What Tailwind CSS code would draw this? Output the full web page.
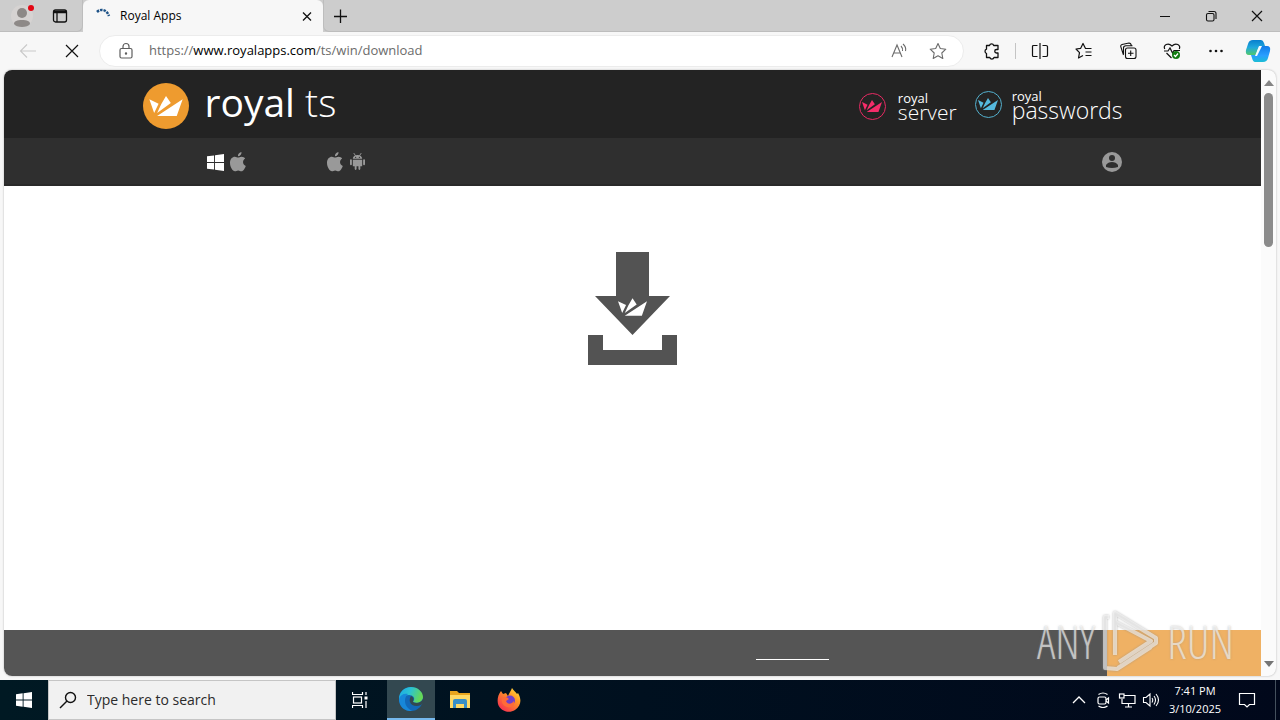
<!DOCTYPE html>
<html lang="en">
<head>
<meta charset="utf-8">
<title>Royal Apps</title>
<script src="https://cdn.jsdelivr.net/npm/@tailwindcss/browser@4"></script>
</head>
<body class="h-screen flex flex-col overflow-hidden bg-[#f7f7f7] font-['Open_Sans','Noto_Sans',sans-serif] text-black">
<svg class="hidden">
  <symbol id="crown" viewBox="0 0 90 54"><path d="M0 9 25 21 13 46ZM45 0 58 19 21 46 32 22ZM90 9 74 54H21Z"/></symbol>
  <symbol id="apple" viewBox="0 0 16 20"><path d="M11.500 0c.2 2.400-1.500 4.200-3.600 4.200C7.700 2 9.400.3 11.500 0ZM8 5.600c1 0 2-.9 3.600-.9 1.500 0 2.800.7 3.600 1.900-3.100 1.900-2.700 6 .6 7.300-.7 2-2.400 5.300-4.400 5.300-1.200 0-1.700-.8-3.200-.8s-2 .8-3.200.8C2.600 19.200 0 15 0 11c0-4 2.400-6.200 4.900-6.200 1.400 0 2.300.8 3.100.8Z"/></symbol>
  <symbol id="windows" viewBox="0 0 18 18"><path d="M0 2.500 7.500 1.500V8.500H0ZM8.500 1.300 18 0V8.500H8.500ZM0 9.500H7.500V16.500L0 15.500ZM8.500 9.500H18V18L8.500 16.700Z"/></symbol>
</svg>

<header class="h-8 shrink-0 flex bg-[#cdcdcd]">
  <div class="w-[83px] flex items-center pl-[11px] gap-4 border-b border-r border-[#bdbdbd] rounded-br-md">
    <button aria-label="Profile" class="size-6"><svg viewBox="0 0 24 24" class="size-6"><circle cx="11" cy="12" r="11" fill="#d6d3d2"/><circle cx="11" cy="9" r="5" fill="#8d8987"/><path d="M3 20c0-3 3-4 8-4s8 1 8 4c-2 4-14 4-16 0Z" fill="#8d8987"/><circle cx="20" cy="4" r="3" fill="#e30613"/></svg></button>
    <button aria-label="Tab actions" class="size-5"><svg viewBox="0 0 20 20" class="size-5" fill="none" stroke="#111" stroke-width="1.300"><rect x="2.500" y="4" width="13" height="12" rx="2"/><path d="M3 6H15.500" stroke-width="2.500"/><path d="M6 6V16"/></svg></button>
  </div>
  <div class="w-[240px] flex items-center bg-[#f7f7f7] rounded-t-md pl-3 pr-2">
    <svg viewBox="0 0 16 16" class="size-4 shrink-0" fill="none" stroke="#1d5287" stroke-width="2.500" stroke-dasharray="2.500 1"><path d="M2 4C6 0 12 2 14 8"/></svg>
    <span class="ml-[9px] text-xs flex-1">Royal Apps</span>
    <button aria-label="Close tab" class="size-4"><svg viewBox="0 0 16 16" class="size-4" stroke="#111" stroke-width="1.300"><path d="M4 4.500 12 12.500M12 4.500 4 12.500"/></svg></button>
  </div>
  <div class="flex-1 flex items-center pl-2 border-b border-l border-[#bdbdbd] rounded-bl-md">
    <button aria-label="New tab" class="size-4"><svg viewBox="0 0 16 16" class="size-4" stroke="#111" stroke-width="1.300"><path d="M8.500 1.500V15M2 8.500H15"/></svg></button>
    <div class="ml-auto flex items-center gap-[30px] pr-[15px]">
      <button aria-label="Minimize" class="size-4"><svg viewBox="0 0 16 16" class="size-4" stroke="#111"><path d="M3 8.500H13"/></svg></button>
      <button aria-label="Restore" class="size-4"><svg viewBox="0 0 16 16" class="size-4" fill="none" stroke="#111" stroke-width="1.100"><rect x="3.500" y="5.500" width="7.500" height="7.500" rx="1.500"/><path d="M5.500 3.500H11Q13 3.500 13 5.500V11"/></svg></button>
      <button aria-label="Close window" class="size-4"><svg viewBox="0 0 16 16" class="size-4" stroke="#111" stroke-width="1.200"><path d="M3 3 13 13M13 3 3 13"/></svg></button>
    </div>
  </div>
</header>

<div class="h-[38px] shrink-0 flex items-center pl-[18px] pr-[9px]">
  <button aria-label="Back" disabled class="size-5"><svg viewBox="0 0 20 20" class="size-5" fill="none" stroke="#c9c9c9" stroke-width="1.100"><path d="M18 10H3M9 3.500 2.500 10 9 16.500"/></svg></button>
  <button aria-label="Stop" class="size-5 ml-6"><svg viewBox="0 0 20 20" class="size-5" stroke="#111" stroke-width="1.200"><path d="M4 4 16 16M16 4 4 16"/></svg></button>
  <div class="ml-[17px] h-[32px] flex-1 flex items-center rounded-full bg-white border border-[#ececec] pl-[17px] pr-[15px]">
    <svg viewBox="0 0 18 18" class="size-[18px]" fill="none" stroke="#5e5e5e" stroke-width="1.200"><rect x="3" y="6.500" width="12" height="9.500" rx="1.500"/><path d="M6 6.500V4.500a3 3 0 0 1 6 0V6.500"/><circle cx="9" cy="11.500" r=".6" fill="#5e5e5e"/></svg>
    <a href="https://www.royalapps.com/ts/win/download" class="ml-[14px] text-[13px] text-[#6b6b6b] whitespace-nowrap">https://<span class="text-black">www.royalapps.com</span>/ts/win/download</a>
    <button aria-label="Read aloud" class="ml-auto size-5"><svg viewBox="0 0 20 20" class="size-5" fill="none" stroke="#6b6b6b" stroke-width="1.100"><path d="M3 16 8 4 13 16M5 12H11M12 5Q14 7 13.500 10M14 3Q17.500 6 16.500 10"/></svg></button>
    <button aria-label="Add to favorites" class="ml-[19px] size-5"><svg viewBox="0 0 20 20" class="size-5" fill="none" stroke="#6b6b6b" stroke-width="1.100" stroke-linejoin="round"><path d="M10 2.500 12.300 7.500 17.800 8.200 13.800 12 14.800 17.500 10 14.800 5.200 17.500 6.200 12 2.200 8.200 7.700 7.500Z"/></svg></button>
  </div>
  <div class="flex items-center ml-[18px] gap-6">
    <div class="flex items-center">
      <button aria-label="Extensions" class="size-5"><svg viewBox="0 0 20 20" class="size-5" fill="none" stroke="#111" stroke-width="1.300" stroke-linejoin="round"><path d="M4.500 4.500H7.500A2.200 2.200 0 0 1 11.700 4.500H16V8.500H14.500A1.500 1.500 0 0 0 14.500 12H16V16.500H12A2.200 2.200 0 0 1 7.800 16.500H4.500V12.500A2.300 2.300 0 0 1 4.500 8.200Z"/></svg></button>
      <span class="ml-[13px] w-px h-4 bg-[#c4c4c4]"></span>
      <button aria-label="Split screen" class="ml-[14px] size-5"><svg viewBox="0 0 20 20" class="size-5" fill="none" stroke="#111" stroke-width="1.200"><path d="M7.500 4.500H3.500Q2.500 4.500 2.500 5.500V14.500Q2.500 15.500 3.500 15.500H7.500M12.500 4.500H16Q17.500 4.500 17.500 5.500V14.500Q17.500 15.500 16 15.500H12.500M10 2V18"/></svg></button>
    </div>
    <button aria-label="Favorites" class="size-5"><svg viewBox="0 0 20 20" class="size-5" fill="none" stroke="#111" stroke-width="1.200" stroke-linejoin="round"><path d="M17.500 7.500H11.500L9 2.500 6.700 7.300 2 8 5.500 11.700 4.500 17 9 14.500M11.500 11H17.500M11.500 14.500H17.500"/></svg></button>
    <button aria-label="Collections" class="size-5"><svg viewBox="0 0 20 20" class="size-5" fill="none" stroke="#111" stroke-width="1.100"><rect x="7.500" y="7" width="10.500" height="10.500" rx="2"/><path d="M12.700 9.500V15M10 12.300H15.500M5.500 14 2.700 5.500Q2.500 4 4 3.500L11 2Q13 2 13.500 5M5.500 13V7Q5.500 4.800 8 4.800H14.500"/></svg></button>
    <button aria-label="Browser essentials" class="size-5"><svg viewBox="0 0 20 20" class="size-5" fill="none" stroke="#111" stroke-width="1.200"><path d="M2.700 8C1 4 6 1 10 5 14 1 19 4 17.300 8M2 10H6L8 7 10.500 12 12 9.500H18M4.500 12 9.500 17"/><circle cx="14" cy="14" r="4" fill="#107c10" stroke="none"/><path d="m12 14 1.500 1.500 2.500-3" stroke="#fff"/></svg></button>
    <button aria-label="Settings and more" class="size-5"><svg viewBox="0 0 20 20" class="size-5" fill="#111"><circle cx="4.500" cy="10" r="1.300"/><circle cx="10" cy="10" r="1.300"/><circle cx="15.500" cy="10" r="1.300"/></svg></button>
    <button aria-label="Copilot" class="-ml-[5px] size-[26px]"><svg viewBox="0 0 26 26" class="size-[26px]"><defs><linearGradient id="cpa" x2="0" y2="1"><stop stop-color="#087fce"/><stop offset=".5" stop-color="#20a8dc"/><stop offset="1" stop-color="#52c96c"/></linearGradient><linearGradient id="cpb" x2="0" y2="1"><stop stop-color="#127be8"/><stop offset=".6" stop-color="#299fff"/><stop offset="1" stop-color="#1bbdd4"/></linearGradient></defs><path d="M8 2H16Q18 2 19 5L20 8H16Q14 8 13 11L11 17H4Q0 17 1 12L3 6Q4 2 8 2Z" fill="url(#cpa)"/><path d="M18 24H10Q8 24 7 20L6 17H10Q12 17 13 14L15 8H22Q26 8 25 13L23 20Q22 24 18 24Z" fill="url(#cpb)"/><path d="M14 8H17L12 18H10Z" fill="#f5fbff"/></svg></button>
  </div>
</div>

<div class="flex-1 min-h-0 px-1 pb-1">
  <div class="relative h-full flex rounded-lg overflow-hidden bg-[#fbfbfb] shadow-[0_0_2px_#aaa]">
    <div class="flex-1 flex flex-col bg-white">
      <div class="h-[68px] shrink-0 bg-[#232323]">
        <div class="h-full max-w-[980px] mx-auto flex items-center text-white">
          <a href="#" class="flex items-center pt-1">
            <span class="size-[46px] rounded-full bg-[#ee9b2f] flex items-center justify-center"><svg class="w-9 h-5 fill-white"><use href="#crown"/></svg></span>
            <span class="ml-4 text-[39px] leading-[46px] -mt-2">royal <span class="font-light">ts</span></span>
          </a>
          <a href="#" class="ml-auto flex items-center gap-3 pt-1">
            <span class="size-[27px] rounded-full border border-[#e82a63] flex items-center justify-center"><svg class="w-5 h-3 fill-[#f52d6a]"><use href="#crown"/></svg></span>
            <span class="flex flex-col text-[13px] leading-[11px]">royal<span class="text-[21px] leading-4 font-light">server</span></span>
          </a>
          <a href="#" class="ml-[18px] flex items-center gap-[10px]">
            <span class="size-[27px] rounded-full border border-[#53b0ce] flex items-center justify-center"><svg class="w-5 h-3 fill-[#55b9de]"><use href="#crown"/></svg></span>
            <span class="flex flex-col text-[13px] leading-[11px]">royal<span class="text-[23px] leading-4 font-light">passwords</span></span>
          </a>
        </div>
      </div>
      <nav class="h-12 shrink-0 bg-[#2f2f2f] border-b-2 border-[#292929]">
        <div class="h-full max-w-[980px] mx-auto flex items-center pt-px pl-16 text-[#999]">
          <a href="#" aria-label="Windows" class="pt-px"><svg class="w-[17px] h-[17px] fill-white"><use href="#windows"/></svg></a>
          <a href="#" aria-label="macOS" class="ml-[6px]"><svg class="w-4 h-5 fill-current"><use href="#apple"/></svg></a>
          <a href="#" aria-label="iOS" class="ml-[81px]"><svg class="w-4 h-5 fill-current"><use href="#apple"/></svg></a>
          <a href="#" aria-label="Android" class="ml-[7px]"><svg viewBox="0 0 16 18" class="w-[15px] h-[17px] fill-current"><path d="M3 6C3 3.500 5 2 8 2S13 3.500 13 6ZM3 7H13V14H11V17Q10 19 9 17V14H7V17Q6 19 5 17V14H3Z"/><rect y="6.500" width="2" height="6.500" rx="1"/><rect x="14" y="6.500" width="2" height="6.500" rx="1"/><path d="M4 0 6 3M12 0 10 3" stroke="currentColor"/><circle cx="6" cy="4.500" r=".7" fill="#2f2f2f"/><circle cx="10" cy="4.500" r=".7" fill="#2f2f2f"/></svg></a>
          <a href="#" aria-label="Account" class="ml-auto mr-px"><svg viewBox="0 0 20 20" class="size-5"><circle cx="10" cy="10" r="10" fill="#999"/><circle cx="10" cy="6" r="3" fill="#2f2f2f"/><path d="M4 15V13Q6 10 10 10T16 13V15Q10 17 4 15Z" fill="#2f2f2f"/></svg></a>
        </div>
      </nav>
      <main class="flex-1 flex justify-center pt-[66px]">
        <svg viewBox="0 0 89 113" class="w-[89px] h-[113px]" fill="#535353"><path d="M28 0H61V44H82L44.500 83 7 44H28ZM0 83H15V98H74V83H89V113H0Z"/><use href="#crown" x="30" y="46" width="29" height="18" fill="#fff"/></svg>
      </main>
      <footer class="h-[46px] shrink-0 flex bg-[#555]">
        <div class="flex-1 flex justify-end pr-[278px] pt-[29px]"><a href="#" aria-label="Learn more" class="block w-[73px] h-px bg-white"></a></div>
        <button aria-label="Accept" class="w-[154px] bg-[#efb164]"></button>
      </footer>
    </div>
    <div class="w-[15px] flex flex-col items-center pt-[10px] pb-[9px]">
      <svg viewBox="0 0 10 6" class="w-[10px] h-[6px]" fill="#858585"><path d="M5 0 10 6H0Z"/></svg>
      <div class="mt-[7px] w-[9px] h-[154px] rounded-full bg-[#8b8b8b]"></div>
      <svg viewBox="0 0 10 6" class="mt-auto w-[10px] h-[6px]" fill="#757575"><path d="M0 0H10L5 6Z"/></svg>
    </div>
    <div class="absolute right-[42px] bottom-0 h-[70px] flex items-center gap-[7px] text-[46px] font-light text-white/60 font-['Open_Sans_Condensed_Light','Open_Sans_Condensed','Liberation_Sans_Narrow','Liberation_Sans',sans-serif] [text-shadow:0_0_2px_#8888]">
      <span>ANY</span>
      <svg viewBox="0 0 58 62" class="w-[58px] h-[62px] drop-shadow-[0_0_1px_#888]" fill="none" stroke="#ffffff90" stroke-width="4" stroke-linejoin="round"><path d="M13 45V3L54 28V33L16 58M13 12 49 31 17 52M7 7H3V58L15 59 49 37"/></svg>
      <span>RUN</span>
    </div>
  </div>
</div>

<footer class="h-10 shrink-0 flex items-center text-white bg-linear-to-r from-[#001923] via-[#00101f] to-[#01081b]">
  <button aria-label="Start" class="w-12 h-full flex items-center justify-center"><svg class="size-4 fill-white"><use href="#windows"/></svg></button>
  <label class="w-[288px] h-full flex items-center bg-[#f1f1f1] border border-[#c5c5c5] pl-[10px]">
    <svg viewBox="0 0 18 18" class="size-[18px] shrink-0" fill="none" stroke="#111" stroke-width="1.400"><circle cx="11.500" cy="6.500" r="5"/><path d="M8 10 1 17"/></svg>
    <input aria-label="Search" placeholder="Type here to search" class="ml-[10px] w-full min-w-0 bg-transparent text-sm placeholder:text-[#2b2b2b] outline-none">
  </label>
  <button aria-label="Task view" class="w-[51px] h-full flex items-center pl-4"><svg viewBox="0 0 16 16" class="size-4" fill="none" stroke="#fff" stroke-width="1.200"><path d="M.5 0V2.500H10.500V0M.5 16V13.500H10.500V16M14 0V3M14 9V16"/><rect x="1.500" y="5" width="8" height="6"/><path d="M12.500 6H15.500" stroke-width="3"/></svg></button>
  <button aria-label="Microsoft Edge" class="w-12 h-full flex items-center justify-center bg-[#334850] border-b-2 border-[#76b9ed]"><svg viewBox="0 0 24 24" class="size-6"><defs><linearGradient id="eg" x2="1" y2=".3"><stop stop-color="#19a8e8"/><stop offset=".5" stop-color="#2cc3d2"/><stop offset="1" stop-color="#65d857"/></linearGradient></defs><circle cx="12" cy="12" r="12" fill="#1268b8"/><path d="M0 12C0 5 5 0 12 0S24 5 24 10C24 15 18 17 14 15 17 11 14 8 10 8 5 8 1 11 0 15Z" fill="url(#eg)"/><path d="M0 12C1 8 5 6 9 7 5 10 5 17 9 21 12 24 14 24 14 24 5 25 0 19 0 12Z" fill="#1787d9"/><path d="M14 15C17 17 22 16 24 12V16L22 18C18 20 12 19 11 15 10 12 12 9 12 9 16 11 14 13 14 15Z" fill="#334850"/></svg></button>
  <button aria-label="File Explorer" class="w-[49px] h-full flex items-center justify-center"><svg viewBox="0 0 22 20" class="w-[22px] h-5"><path d="M1 1H8L10 3H21V8H1Z" fill="#e9a51d"/><path d="M1 5H21V18H1Z" fill="#ffd965"/><path d="M4 18V11Q4 9 6 9H16Q18 9 18 11V18H15V14H7V18Z" fill="#398fc6"/></svg></button>
  <button aria-label="Firefox" class="w-[49px] h-full flex items-center justify-center"><svg viewBox="0 0 24 24" class="size-6"><defs><linearGradient id="ff" x1="1" x2=".2" y2="1"><stop stop-color="#fff044"/><stop offset=".4" stop-color="#ff9825"/><stop offset="1" stop-color="#f62c52"/></linearGradient></defs><path d="M4 3 6 6 9 5 11 8C12 5 14 3 15 0 17 3 19 4 20 6L21 5C25 12 24 18 18 22 12 26 3 23 1 16 0 11 1 7 4 3Z" fill="url(#ff)"/><circle cx="13" cy="12.500" r="5" fill="#7140c9"/><path d="M5 10C8 8 10 9 12 11L9 13C10 16 14 17 17 13 18 18 14 20 10 19 6 18 4 14 5 10Z" fill="#ff6b38"/></svg></button>
  <div class="ml-auto h-full flex items-center">
    <button aria-label="Hidden icons" class="size-4"><svg viewBox="0 0 16 16" class="size-4" fill="none" stroke="#fff" stroke-width="1.300"><path d="M2 11 8 5 14 11"/></svg></button>
    <button aria-label="Meet now" class="size-4 ml-2"><svg viewBox="0 0 16 16" class="size-4" fill="none" stroke="#fff" stroke-width="1.200"><rect x="3" y="5" width="8" height="7" rx="1.500"/><path d="M11 8 13.500 6V11L11 9M3.500 2.500Q8-.5 12.500 2.500M3.500 14Q8 17 12.500 14"/></svg></button>
    <button aria-label="Network" class="size-[18px] ml-[7px]"><svg viewBox="0 0 18 18" class="size-[18px]" fill="none" stroke="#fff" stroke-width="1.200"><path d="M6 4.500H17V12.500H4V8M10.500 13V16M7 16H14"/><rect x="1.500" y="3" width="4.500" height="4"/></svg></button>
    <button aria-label="Volume" class="size-[18px] ml-[6px]"><svg viewBox="0 0 18 18" class="size-[18px]" fill="none" stroke="#fff" stroke-width="1.100"><path d="M1.500 6.500H4L8 3V15L4 11.500H1.500ZM10 7Q11.500 9 10 11.500M12 5Q15 9 12 13.500M14 3Q19 9 14 15"/></svg></button>
    <div class="w-[70px] text-center text-[11px] leading-[18px] whitespace-nowrap">7:41 PM<br>3/10/2025</div>
    <button aria-label="Notifications" class="size-[18px] ml-2 mr-[19px]"><svg viewBox="0 0 18 18" class="size-[18px]" fill="none" stroke="#fff" stroke-width="1.200"><path d="M1.500 2.500H16.500V13.500H11.500L9 16 6.500 13.500H1.500Z"/></svg></button>
    <span class="w-px h-full bg-[#44505d] mr-1"></span>
  </div>
</footer>
</body>
</html>
